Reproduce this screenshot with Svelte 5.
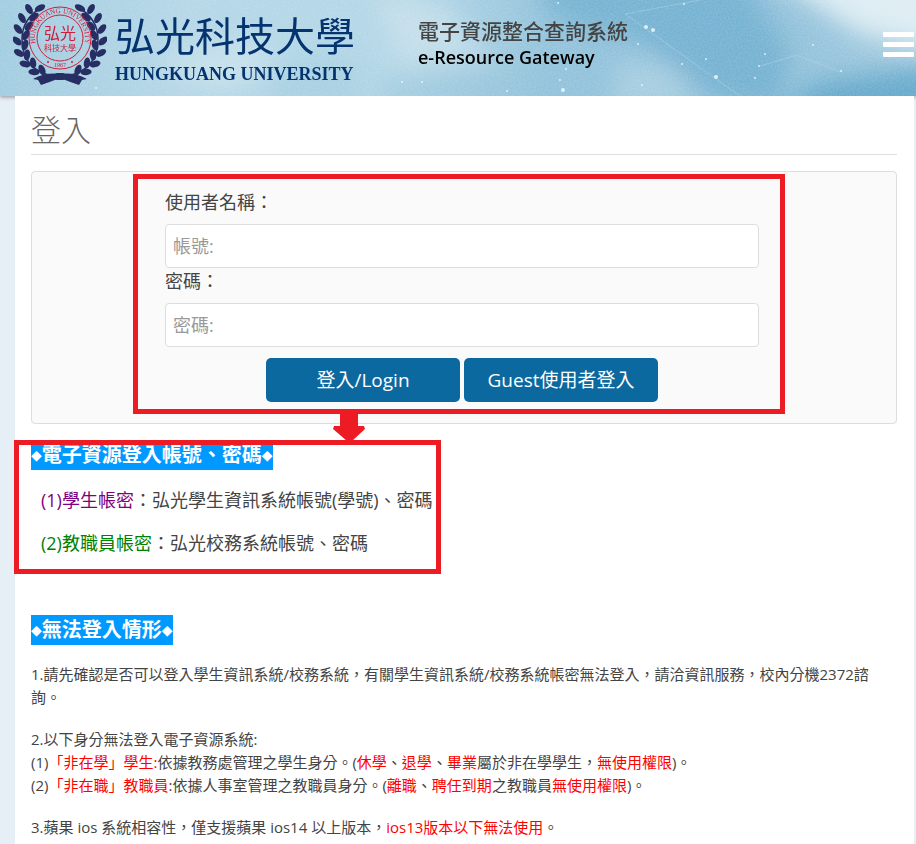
<script lang="ts">
  let account = '';
  let password = '';

  // laurel leaves of the left branch: x, y, rotation
  const leaves = [
    [40, 9, 62], [29, 10, -30], [34, 18, 50],
    [22, 19, -30], [29, 27, 40],
    [18, 30, -38], [26, 36, 28],
    [17, 42, -48], [25, 46, 18],
    [19, 54, -60], [27, 56, 6],
    [25, 65, -75], [33, 64, -8],
    [34, 73, -88], [42, 71, -22]
  ];

  // bright specks on the banner
  const specks = [
    [646, 27, 2], [653, 30, 2], [716, 77, 2], [642, 85, 1], [563, 90, 2],
    [402, 82, 1], [422, 82, 1], [507, 91, 1], [813, 45, 1], [765, 54, 1],
    [841, 71, 1], [759, 66, 1], [706, 59, 1], [682, 64, 1], [96, 88, 1],
    [558, 3, 1], [684, 4, 1], [566, 69, 1], [560, 80, 1], [638, 44, 1], [755, 78, 1]
  ];
</script>

<header class="banner">
  <svg class="sky" viewBox="0 0 916 96" preserveAspectRatio="xMidYMid slice" aria-hidden="true">
    <defs>
      <linearGradient id="base" x1="0" x2="1" y1="0" y2="0">
        <stop offset="0" stop-color="#a2cde1" />
        <stop offset="0.2" stop-color="#b5d7e7" />
        <stop offset="0.45" stop-color="#b4d7e7" />
        <stop offset="0.6" stop-color="#94c4dc" />
        <stop offset="0.8" stop-color="#8fc0da" />
        <stop offset="1" stop-color="#a0cae0" />
      </linearGradient>
      <filter id="soft" x="-30%" y="-50%" width="160%" height="200%">
        <feGaussianBlur stdDeviation="12" />
      </filter>
      <filter id="grain" x="0" y="0" width="100%" height="100%">
        <feTurbulence type="fractalNoise" baseFrequency="0.6" numOctaves="2" />
        <feColorMatrix values="0 0 0 0 1  0 0 0 0 1  0 0 0 0 1  1 0 0 0 -0.3" />
      </filter>
    </defs>
    <rect width="916" height="96" fill="url(#base)" />
    <g filter="url(#soft)">
      <path d="M530 -20H740L790 50L780 110L720 100L640 40L560 20Z" fill="#6eadcf" opacity="0.75" />
      <path d="M760 -30H940V50L860 34Z" fill="#e9f3f7" opacity="0.85" />
      <path d="M810 84L870 74L940 66V120H780Z" fill="#5fa6ca" opacity="0.9" />
      <path d="M620 60L670 66L700 110H610Z" fill="#b5d7e6" opacity="0.6" />
      <path d="M150 60L240 40L290 60L220 90Z" fill="#d2e7ef" opacity="0.6" />
      <path d="M375 -5L450 10L490 60L400 60Z" fill="#cce3ed" opacity="0.7" />
      <path d="M380 80L540 70L600 110H380Z" fill="#8fc2da" opacity="0.5" />
      <path d="M270 60H360V110H270Z" fill="#8fc2da" opacity="0.3" />
    </g>
    <path d="M625 14L740 96M760 66L797 55L840 72M625 14L700 0" stroke="#b9dae8" opacity="0.4" fill="none" />
    <rect width="916" height="96" filter="url(#grain)" opacity="0.25" />
    {#each specks as [x, y, r]}
      <circle cx={x} cy={y} {r} fill="#f4fbff" opacity="0.8" />
    {/each}
  </svg>

  <a class="brand" href="/">
    <svg class="seal" width="94" height="86" viewBox="13 2 94 86" role="img" aria-label="弘光科技大學">
      <defs>
        <g id="branch">
          <path d="M52 77Q22 70 22 40Q22 20 42 8" fill="none" stroke="#272e63" stroke-width="1.5" />
          {#each leaves as [x, y, angle]}
            <ellipse cx={x} cy={y} rx="3.2" ry="5.6" transform="rotate({angle} {x} {y})" />
          {/each}
          <path d="M60 75Q46 73 33 80L38 81L41 86Q50 83 60 79Z" />
        </g>
        <path id="ring" d="M46.5 60A25 25 0 1 1 73.5 60" />
      </defs>
      <g fill="#272e63">
        <use href="#branch" />
        <use href="#branch" transform="translate(120 0) scale(-1 1)" />
        <rect x="55" y="74" width="10" height="7" rx="2" />
      </g>
      <g fill="none" stroke="#d01c39">
        <circle cx="60" cy="39" r="31" />
        <circle cx="60" cy="39" r="23" />
      </g>
      <g fill="#d01c39" text-anchor="middle">
        <text class="ring-text" font-size="7"><textPath href="#ring" startOffset="50%">HUNGKUANG UNIVERSITY</textPath></text>
        <text class="seal-text" x="60" y="40" font-size="16">弘光</text>
        <text class="seal-text" x="60" y="52" font-size="8">科技大學</text>
        <text class="ring-text" x="60" y="68" font-size="6">1967</text>
        <circle cx="48" cy="63" r="1" />
        <circle cx="72" cy="63" r="1" />
      </g>
    </svg>
    <span class="brand-names">
      <span class="brand-zh">弘光科技大學</span>
      <span class="brand-en">HUNGKUANG UNIVERSITY</span>
    </span>
  </a>

  <div class="system">
    <div class="system-zh">電子資源整合查詢系統</div>
    <div class="system-en">e-Resource Gateway</div>
  </div>

  <button class="menu" type="button" aria-label="Menu">
    <span></span>
    <span></span>
    <span></span>
  </button>
</header>

<main>
  <h1>登入</h1>

  <div class="panel">
    <form on:submit|preventDefault>
      <label for="account">使用者名稱：</label>
      <input id="account" type="text" placeholder="帳號:" bind:value={account} />
      <label for="password">密碼：</label>
      <input id="password" type="password" placeholder="密碼:" bind:value={password} />
      <div class="actions">
        <button type="submit">登入/Login</button>
        <button type="button">Guest使用者登入</button>
      </div>
      <div class="mark mark-form"></div>
    </form>
  </div>

  <section class="accounts">
    <h2><i>◆</i>電子資源登入帳號、密碼<i>◆</i></h2>
    <p><span class="purple">(1)學生帳密</span>：弘光學生資訊系統帳號(學號)、密碼</p>
    <p><span class="green">(2)教職員帳密</span>：弘光校務系統帳號、密碼</p>
    <div class="mark mark-accounts"></div>
    <svg class="arrow" width="34" height="30" viewBox="0 0 34 30" aria-hidden="true">
      <path d="M8 0H26V13H32L33 16L20 28H15L1 16L2 13H8Z" fill="#ed1c24" />
    </svg>
  </section>

  <section class="notes">
    <h2><i>◆</i>無法登入情形<i>◆</i></h2>
    <p>1.請先確認是否可以登入學生資訊系統/校務系統，有關學生資訊系統/校務系統帳密無法登入，請洽資訊服務，校內分機2372諮詢。</p>
    <p>
      2.以下身分無法登入電子資源系統:<br />
      (1)<em>「非在學」學生:</em>依據教務處管理之學生身分。(<em>休學</em>、<em>退學</em>、<em>畢業</em>屬於非在學學生，<em>無使用權限</em>)。<br />
      (2)<em>「非在職」教職員</em>:依據人事室管理之教職員身分。(<em>離職</em>、<em>聘任到期</em>之教職員<em>無使用權限</em>)。
    </p>
    <p>3.蘋果 ios 系統相容性，僅支援蘋果 ios14 以上版本，<em>ios13版本以下無法使用</em>。</p>
  </section>
</main>

<style>
  :global(body) {
    background: #e6eff5;
    color: #444;
    font-family: "Open Sans", "Noto Sans CJK TC", sans-serif;
    font-size: 15px;
    font-weight: 400;
    line-height: 23px;
  }

  .banner {
    position: relative;
    display: flex;
    align-items: center;
    height: 96px;
    overflow: hidden;
    box-shadow: 0 1px 4px rgba(0, 0, 0, 0.4);
  }

  .sky {
    position: absolute;
    inset: 0;
    width: 100%;
    height: 100%;
  }

  .brand {
    position: relative;
    display: flex;
    gap: 8px;
    width: 418px;
    padding: 0 0 8px 13px;
    box-sizing: border-box;
    color: #04336f;
    text-decoration: none;
  }

  .seal {
    flex: none;
  }

  .seal-text {
    font-family: "Noto Sans CJK TC", sans-serif;
  }

  .ring-text {
    font-family: "Liberation Serif", serif;
    font-weight: 400;
  }

  .brand-names {
    display: flex;
    flex-direction: column;
    justify-content: flex-end;
    white-space: nowrap;
  }

  .brand-zh {
    font-size: 40px;
    font-weight: 400;
    line-height: 50px;
  }

  .brand-en {
    font-family: "Liberation Serif", serif;
    font-size: 18px;
    font-weight: 700;
    line-height: 26px;
  }

  .system {
    position: relative;
    flex: 1;
    line-height: 26px;
    padding-bottom: 8px;
  }

  .system-zh {
    font-size: 21px;
    font-weight: 500;
  }

  .system-en {
    color: #000;
    font-size: 18px;
    font-weight: 600;
  }

  .menu {
    position: relative;
    display: flex;
    flex-direction: column;
    gap: 5px;
    width: 31px;
    margin: 0 2px 8px 0;
    padding: 0;
    border: 0;
    background: none;
    cursor: pointer;
  }

  .menu span {
    height: 5px;
    border-radius: 1px;
    background: #fff;
  }

  main {
    margin: 0 2px 0 15px;
    padding: 13px 17px 5px 16px;
    position: relative;
    background: #fff;
  }

  h1 {
    margin: 0 0 16px;
    padding-bottom: 3px;
    border-bottom: 1px solid #ddd;
    color: #666;
    font-size: 30px;
    font-weight: 300;
    line-height: 42px;
  }

  .panel {
    padding: 17px 137px 21px 133px;
    border: 1px solid #ddd;
    border-radius: 4px;
    background: #fafafa;
  }

  form {
    position: relative;
  }

  label {
    display: block;
    margin-bottom: 9px;
    font-size: 18px;
    line-height: 26px;
  }

  input {
    display: block;
    width: 100%;
    height: 44px;
    padding: 0 7px;
    box-sizing: border-box;
    border: 1px solid #ddd;
    border-radius: 4px;
    background: #fff;
    color: #444;
    font: inherit;
    font-size: 18px;
  }

  input::placeholder {
    color: #999;
  }

  .actions {
    display: flex;
    justify-content: center;
    gap: 4px;
    margin-top: 11px;
  }

  .actions button {
    width: 194px;
    height: 44px;
    padding: 0;
    border: 0;
    border-radius: 5px;
    background: #0b69a0;
    color: #fff;
    font: inherit;
    font-size: 19px;
    cursor: pointer;
  }

  .mark {
    position: absolute;
    border: 5px solid #ed1c24;
    pointer-events: none;
  }

  .mark-form {
    inset: -15px -26px -12px -32px;
  }

  .mark-accounts {
    top: 0;
    left: -17px;
    width: 417px;
    height: 124px;
  }

  .arrow {
    position: absolute;
    top: -27px;
    left: 301px;
  }

  .accounts {
    position: relative;
    margin: 16px 0 59px;
  }

  h2 {
    display: flex;
    align-items: center;
    width: fit-content;
    margin: 0 0 18px;
    background: #09f;
    color: #fff;
    font-size: 20px;
    font-weight: 700;
    line-height: 30px;
  }

  h2 i {
    font-family: "DejaVu Sans", sans-serif;
    font-size: 14px;
    font-style: normal;
    font-weight: 400;
  }

  .accounts p {
    margin: 0 10px 18px;
    font-size: 18px;
    line-height: 25px;
  }

  .purple {
    color: #800080;
  }

  .green {
    color: #008000;
  }

  .notes p {
    margin: 0 0 19px;
  }

  .notes p:last-child {
    margin-bottom: 0;
  }

  em {
    color: #f00;
    font-style: normal;
  }
</style>
